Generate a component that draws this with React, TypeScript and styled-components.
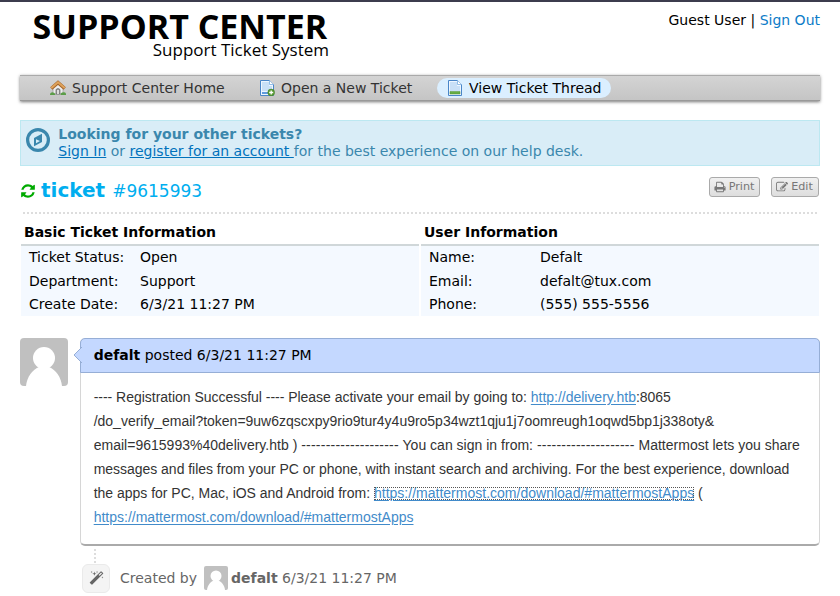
import React from "react";
import styled, { createGlobalStyle } from "styled-components";

const Global = createGlobalStyle`
  * { box-sizing: border-box; }
  body { margin: 0; background: #fff; color: #000; font: 14px/20px "DejaVu Sans", sans-serif; }
  a { color: #0072bc; }
  #root { overflow: hidden; height: 596px; }
`;

const Page = styled.div`
  height: 596px;
  overflow: hidden;
  padding: 0 20px;
  border-top: 2px solid #3c3c4d;
`;
const Header = styled.header`
  display: flex;
  justify-content: space-between;
  height: 73px;
`;
const Logo = styled.div`
  width: 310px;
  padding-left: 12.500px;
  font-family: "Open Sans", sans-serif;
  white-space: nowrap;
`;
const LogoTitle = styled.div`
  height: 38px;
  padding-top: 9px;
  font-size: 34px;
  font-weight: 700;
  line-height: 30px;
`;
const LogoSub = styled.div`
  width: 296.500px;
  font-size: 17px;
  line-height: 20px;
  text-align: right;
`;
const Account = styled.div`
  padding-top: 8px;
  a { color: #0d7cc8; text-decoration: none; }
`;
const Nav = styled.nav`
  display: flex;
  height: 26px;
  padding: 2px 0 0 20px;
  border-top: 1px solid #aaa;
  background: linear-gradient(#d4d4d4, #c4c4c4);
  box-shadow: inset 0 -1px 0 #999, 0 1px 3px #777;
`;
const NavItem = styled.div<{ $w: number; $active?: boolean }>`
  display: flex;
  align-items: center;
  width: ${(p) => p.$w}px;
  height: 20px;
  padding-left: 10px;
  gap: 6px;
  border-radius: 10px;
  white-space: nowrap;
  color: ${(p) => (p.$active ? "#000" : "#333")};
  background: ${(p) => (p.$active ? "#dbefff" : "transparent")};
  svg { flex: none; }
`;
const Banner = styled.section`
  display: flex;
  height: 46px;
  margin-top: 19px;
  padding: 5px 5px 0;
  gap: 8.300px;
  border: 1px solid #bce8f1;
  background: #d9edf7;
  color: #3a87ad;
  line-height: 17px;
  svg { margin-top: 2px; }
`;
const BannerTitle = styled.div`
  font-weight: 700;
`;
const TitleRow = styled.div`
  display: flex;
  justify-content: space-between;
  height: 48px;
  padding: 11px 1px 0 0;
`;
const Title = styled.h1`
  display: flex;
  align-items: center;
  height: 26px;
  margin: 0;
  color: #00aeef;
  font-size: 20px;
  line-height: 26px;
  svg { margin: 1px 5px 0 0; }
`;
const TicketNumber = styled.span`
  margin: 2px 0 0 7px;
  font-size: 17px;
  font-weight: 400;
`;
const Actions = styled.div`
  display: flex;
  gap: 11px;
`;
const Action = styled.button<{ $w: number }>`
  display: flex;
  align-items: center;
  justify-content: center;
  gap: 3px;
  width: ${(p) => p.$w}px;
  height: 20px;
  padding: 0 1px 0 0;
  border: 1px solid #aaa;
  border-radius: 3px;
  background: linear-gradient(#f0f0f0, #dedede);
  color: #777;
  font: 11.200px/18px "DejaVu Sans", sans-serif;
`;
const Rule = styled.div<{ $vertical?: boolean }>`
  ${(p) =>
    p.$vertical
      ? "width: 2px; height: 14px; margin: 3px 0 0 74px; background: repeating-linear-gradient(#ddd 0 2px, transparent 2px 4px);"
      : "height: 2px; margin: -2px 3px 0; background: repeating-linear-gradient(90deg, #ddd 0 2px, transparent 2px 4px);"}
`;
const InfoGrid = styled.div`
  display: grid;
  grid-template-columns: 398px 398px;
  gap: 2px;
  margin: 8px 0 0 1px;
`;
const InfoHead = styled.div`
  height: 24px;
  padding-left: 3px;
  border-bottom: 2px solid #d0d7d9;
  font-weight: 700;
`;
const InfoBody = styled.dl`
  display: grid;
  grid-template-columns: 111px 1fr;
  grid-template-rows: 24px 23px 23px;
  margin: 0;
  padding: 0 8px;
  background: #f4f9ff;
  line-height: 23px;
`;
const Term = styled.dt``;
const Value = styled.dd`
  margin: 0;
`;
const Thread = styled.article`
  display: flex;
  gap: 12px;
  margin-top: 22px;
`;
const Card = styled.div`
  width: 740px;
  height: 208px;
  border: 1px solid #d6d6d6;
  border-top: 0;
  border-bottom: 2px solid #aaa;
  border-radius: 5px;
`;
const CardHead = styled.div`
  position: relative;
  height: 35px;
  margin: 0 -1px;
  padding: 6px 12.700px;
  border: 1px solid #96aed6;
  border-radius: 5px 5px 0 0;
  background: #c4d8ff;
  svg { position: absolute; left: -8px; top: 7px; }
`;
const Message = styled.div`
  padding: 12px 0 0 12.700px;
  color: #333;
  font: 14px/24px "Liberation Sans", sans-serif;
  a { color: #428bca; text-underline-offset: 2px; }
`;
const Line = styled.div<{ $ls?: number }>`
  height: 24px;
  white-space: pre;
  letter-spacing: ${(p) => p.$ls ?? 0}px;
`;
const Dashes = styled.span`
  letter-spacing: 0.22px;
`;
const FocusLink = styled.a`
  display: inline-block;
  line-height: 13px;
  letter-spacing: 0.01px;
  outline: 1px dotted #555;
  outline-offset: -1px;
`;
const Event = styled.footer`
  display: flex;
  align-items: center;
  margin-left: 62px;
  height: 30px;
  color: #666;
  white-space: pre;
`;
const EventIcon = styled.span`
  display: grid;
  place-items: center;
  width: 28px;
  height: 29px;
  margin-right: 10px;
  border: 1px solid #eaeaea;
  border-radius: 6px;
  background: #f4f4f4;
`;
const EventAvatar = styled.span`
  display: flex;
  margin: 0 3px 0 7px;
`;

const glyphs = {
  refresh:
    "M1639 1056q0 5-1 7-64 268-268 434.5t-478 166.5q-146 0-282.5-55t-243.5-157l-129 129q-19 19-45 19t-45-19-19-45v-448q0-26 19-45t45-19h448q26 0 45 19t19 45-19 45l-137 137q71 66 161 102t187 36q134 0 250-65t186-179q11-17 53-117 8-23 30-23h192q13 0 22.5 9.5t9.5 22.5zm25-800v448q0 26-19 45t-45 19h-448q-26 0-45-19t-19-45 19-45l138-138q-148-137-349-137-134 0-250 65t-186 179q-11 17-53 117-8 23-30 23h-199q-13 0-22.5-9.5t-9.5-22.5v-7q65-268 270-434.5t480-166.5q146 0 284 55.5t245 156.5l130-129q19-19 45-19t45 19 19 45z",
  print:
    "M448 1536h896v-256h-896v256zm0-640h896v-384h-160q-40 0-68-28t-28-68v-160h-640v640zm1152 64q0-26-19-45t-45-19-45 19-19 45 19 45 45 19 45-19 19-45zm128 0v416q0 13-9.5 22.5t-22.5 9.5h-224v160q0 40-28 68t-68 28h-960q-40 0-68-28t-28-68v-160h-224q-13 0-22.5-9.5t-9.5-22.5v-416q0-79 56.5-135.5t135.5-56.5h64v-544q0-40 28-68t68-28h672q40 0 88 20t76 48l152 152q28 28 48 76t20 88v256h64q79 0 135.5 56.5t56.5 135.5z",
  edit:
    "M888 1184l116-116-152-152-116 116v56h96v96h56zm440-720q-16-16-33 1l-350 350q-17 17-1 33t33-1l350-350q17-17 1-33zm80 594v190q0 119-84.5 203.5t-203.5 84.5h-832q-119 0-203.5-84.5t-84.5-203.5v-832q0-119 84.5-203.5t203.5-84.5h832q63 0 117 25 15 7 18 23 3 17-9 29l-49 49q-14 14-32 8-23-6-45-6h-832q-66 0-113 47t-47 113v832q0 66 47 113t113 47h832q66 0 113-47t47-113v-126q0-13 9-22l64-64q15-15 35-7t20 29zm-96-738l288 288-672 672h-288v-288zm444 132l-92 92-288-288 92-92q28-28 68-28t68 28l152 152q28 28 28 68t-28 68z",
  magic:
    "M1254 581l293-293-107-107-293 293zm447-293q0 27-18 45l-1286 1286q-18 18-45 18t-45-18l-198-198q-18-18-18-45t18-45l1286-1286q18-18 45-18t45 18l198 198q18 18 18 45zm-1351-190l98 30-98 30-30 98-30-98-98-30 98-30 30-98zm350 162l196 60-196 60-60 196-60-196-196-60 196-60 60-196zm930 478l98 30-98 30-30 98-30-98-98-30 98-30 30-98zm-640-640l98 30-98 30-30 98-30-98-98-30 98-30 30-98z",
};

function Glyph({ name, size, color = "currentColor" }: { name: keyof typeof glyphs; size: number; color?: string }) {
  return (
    <svg width={size} height={size} viewBox="0 0 1792 1792" fill={color}>
      <path d={glyphs[name]} />
    </svg>
  );
}

function Avatar({ size }: { size: number }) {
  return (
    <svg width={size} height={size} viewBox="0 0 48 48">
      <rect width="48" height="48" rx="4" fill="#c0c0c0" />
      <circle cx="24" cy="20" r="11" fill="#fff" />
      <path d="M6 48c1-9 6-16 13-19h10c7 3 12 10 13 19z" fill="#fff" />
    </svg>
  );
}

function HomeIcon() {
  return (
    <svg width="16" height="16" viewBox="0 0 16 16">
      <path d="M3 7.5 8 3l5 4.500V14H3z" fill="#eee" stroke="#999" strokeWidth=".7" />
      <path d="M6 14V9.500q2-2 4 0V14z" fill="#999" stroke="#666" strokeWidth=".7" />
      <path d="M7.200 14v-4h1.600v4z" fill="#eee" />
      <path d="M1.300 8.500 8 2.600l6.700 5.900" fill="none" stroke="#a5652a" strokeWidth="3.400" />
      <path d="M1.300 8.100 8 2.300l6.700 5.800" fill="none" stroke="#dfa35c" strokeWidth="2" />
      <path d="M0 15q0-2.700 2.500-2.700T5.500 15zm10.500 0q0-2.700 3-2.700T16 15z" fill="#5b9d48" />
    </svg>
  );
}

function DocIcon({ add }: { add?: boolean }) {
  return (
    <svg width="16" height="16" viewBox="0 0 16 16">
      <path d="M1.500.5h9l4 4v11h-13z" fill="#eef6ff" stroke="#4a86c8" />
      <path d="M3 2h7v4h3v5H3z" fill="#c9e0f7" />
      <path d="M10.500.5v4h4" fill="#fff" stroke="#79aee2" strokeWidth=".8" />
      {add ? (
        <>
          <path d="M3 12h7v2H3z" fill="#5f9bdd" />
          <circle cx="12.200" cy="12.500" r="3.400" fill="#5a9c34" stroke="#3b7a24" strokeWidth=".5" />
          <path d="M12.200 10.500v4m-2-2h4" stroke="#fff" strokeWidth="1.300" />
        </>
      ) : (
        <path d="M3 11.500h10V14H3z" fill="#66ad43" stroke="#4c9336" strokeWidth=".5" />
      )}
    </svg>
  );
}

function CompassIcon() {
  return (
    <svg width="24" height="24" viewBox="0 0 24 24">
      <circle cx="12" cy="12" r="10.400" fill="none" stroke="#3a87ad" strokeWidth="3.200" />
      <path fillRule="evenodd" d="M16 5.700v8.400l-8 4.200V9.900zM10 11.200v4l4-2.200z" fill="#3a87ad" />
    </svg>
  );
}

function Info({ title, rows }: { title: string; rows: [string, string][] }) {
  return (
    <section>
      <InfoHead>{title}</InfoHead>
      <InfoBody>
        {rows.map(([term, value]) => (
          <React.Fragment key={term}>
            <Term>{term}</Term>
            <Value>{value}</Value>
          </React.Fragment>
        ))}
      </InfoBody>
    </section>
  );
}

export default function App() {
  return (
    <>
      <Global />
      <Page>
        <Header>
          <Logo>
            <LogoTitle>SUPPORT CENTER</LogoTitle>
            <LogoSub>Support Ticket System</LogoSub>
          </Logo>
          <Account>
            Guest User | <a href="#out">Sign Out</a>
          </Account>
        </Header>
        <Nav>
          <NavItem $w={209}><HomeIcon />Support Center Home</NavItem>
          <NavItem $w={188}><DocIcon add />Open a New Ticket</NavItem>
          <NavItem $w={174} $active><DocIcon />View Ticket Thread</NavItem>
        </Nav>
        <Banner>
          <CompassIcon />
          <div>
            <BannerTitle>Looking for your other tickets?</BannerTitle>
            <a href="#in">Sign In</a> or <a href="#register">register for an account </a>
            for the best experience on our help desk.
          </div>
        </Banner>
        <TitleRow>
          <Title>
            <Glyph name="refresh" size={16} color="#0a0" />
            ticket <TicketNumber>#9615993</TicketNumber>
          </Title>
          <Actions>
            <Action $w={51}><Glyph name="print" size={12} />Print</Action>
            <Action $w={48}><Glyph name="edit" size={12} />Edit</Action>
          </Actions>
        </TitleRow>
        <Rule />
        <InfoGrid>
          <Info
            title="Basic Ticket Information"
            rows={[["Ticket Status:", "Open"], ["Department:", "Support"], ["Create Date:", "6/3/21 11:27 PM"]]}
          />
          <Info
            title="User Information"
            rows={[["Name:", "Defalt"], ["Email:", "defalt@tux.com"], ["Phone:", "(555) 555-5556"]]}
          />
        </InfoGrid>
        <Thread>
          <Avatar size={48} />
          <Card>
            <CardHead>
              <svg width="9" height="18" viewBox="0 0 9 18">
                <path d="M9 1 1 9l8 8" fill="#c4d8ff" stroke="#96aed6" />
              </svg>
              <b>defalt</b> posted 6/3/21 11:27 PM
            </CardHead>
            <Message>
              <Line $ls={-0.023}>---- Registration Successful ---- Please activate your email by going to: <a href="#d">http://delivery.htb</a>:8065</Line>
              <Line $ls={-0.012}>/do_verify_email?token=9uw6zqscxpy9rio9tur4y4u9ro5p34wzt1qju1j7oomreugh1oqwd5bp1j338oty&amp;</Line>
              <Line $ls={0.012}>email=9615993%40delivery.htb ) <Dashes>--------------------</Dashes> You can sign in from: <Dashes>--------------------</Dashes> Mattermost lets you share</Line>
              <Line $ls={-0.03}>messages and files from your PC or phone, with instant search and archiving. For the best experience, download</Line>
              <Line $ls={-0.015}>the apps for PC, Mac, iOS and Android from: <FocusLink href="#m">https://mattermost.com/download/#mattermostApps</FocusLink> (</Line>
              <Line><a href="#m">https://mattermost.com/download/#mattermostApps</a></Line>
            </Message>
          </Card>
        </Thread>
        <Rule $vertical />
        <Event>
          <EventIcon><Glyph name="magic" size={15} /></EventIcon>
          Created by
          <EventAvatar><Avatar size={24} /></EventAvatar>
          <b>defalt</b> 6/3/21 11:27 PM
        </Event>
      </Page>
    </>
  );
}
